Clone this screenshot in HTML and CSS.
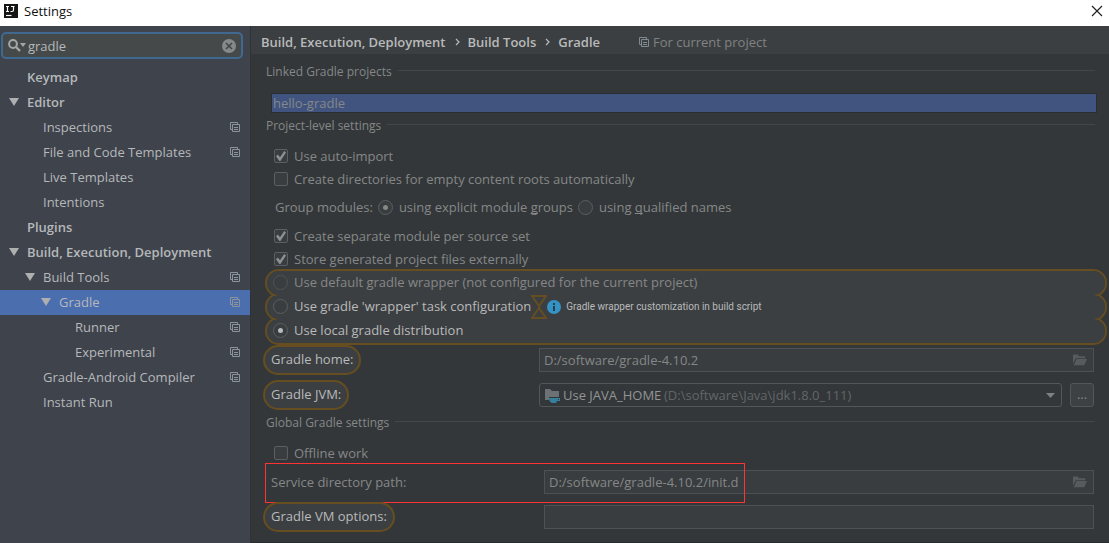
FILE: index.html
```html
<!DOCTYPE html>
<html lang="en">
<head>
<meta charset="utf-8">
<title>Settings</title>
<link rel="stylesheet" href="styles.css">
</head>
<body>
<svg width="0" height="0" class="defs" aria-hidden="true">
  <symbol id="copy" viewBox="0 0 10 10"><path d="M2 7.500H.5V.5H7.500V2M2.500 2.500H9.500V9.500H2.500ZM4 5.500H8M4 7.500H8" fill="none" stroke="currentColor"/></symbol>
  <symbol id="tri" viewBox="0 0 10 8" preserveAspectRatio="none"><path d="M0 0H10L5 8Z" fill="currentColor"/></symbol>
  <symbol id="folder" viewBox="0 0 16 12"><path d="M0 0H5L6.500 2H13V4H3L0 10Z M3.700 5H15L12 11.500H.8Z" fill="currentColor"/></symbol>
</svg>
<header class="titlebar">
  <svg class="app-icon" viewBox="0 0 14 14" aria-hidden="true"><rect width="14" height="14" fill="#151515"/><path d="M2 2.500H5M3.500 2.500V7.500M2 7.500H5M7 2.500H10.500M9.500 2.500V6Q9.500 7.500 8 7.500H6.500" fill="none" stroke="#fff" stroke-width="1.200"/><path d="M2 11.500H7.500" stroke="#fff" stroke-width="1.200"/></svg>
  <h1 class="title">Settings</h1>
  <button class="close" aria-label="Close"><svg viewBox="0 0 12 12"><path d="M1 1L11 11M11 1L1 11" stroke="#222" stroke-width="1.200"/></svg></button>
</header>
<div class="window">
  <aside class="sidebar">
    <div class="search">
      <svg class="search-icon" viewBox="0 0 18 14" aria-hidden="true"><circle cx="5" cy="5" r="3.900" fill="none" stroke="#a3a7a8" stroke-width="2"/><path d="M8 8L12 12" stroke="#a3a7a8" stroke-width="2.400"/><path d="M12 4H18L15 8Z" fill="#a3a7a8"/></svg>
      <input class="search-input" type="text" value="gradle" aria-label="Search settings">
      <button class="clear" aria-label="Clear search"><svg viewBox="0 0 14 14"><circle cx="7" cy="7" r="7" fill="#85898a"/><path d="M4 4L10 10M10 4L4 10" stroke="#424647" stroke-width="1.600"/></svg></button>
    </div>
    <nav class="tree">
      <a class="node bold l1" href="#">Keymap</a>
      <a class="node bold l1" href="#"><svg class="tri"><use href="#tri"/></svg>Editor</a>
      <a class="node l2" href="#">Inspections<svg class="copy"><use href="#copy"/></svg></a>
      <a class="node l2" href="#">File and Code Templates<svg class="copy"><use href="#copy"/></svg></a>
      <a class="node l2" href="#">Live Templates</a>
      <a class="node l2" href="#">Intentions</a>
      <a class="node bold l1" href="#">Plugins</a>
      <a class="node bold l1" href="#"><svg class="tri"><use href="#tri"/></svg>Build, Execution, Deployment</a>
      <a class="node l2" href="#"><svg class="tri"><use href="#tri"/></svg>Build Tools<svg class="copy"><use href="#copy"/></svg></a>
      <a class="node l3 selected" href="#"><svg class="tri"><use href="#tri"/></svg>Gradle<svg class="copy"><use href="#copy"/></svg></a>
      <a class="node l4" href="#">Runner<svg class="copy"><use href="#copy"/></svg></a>
      <a class="node l4" href="#">Experimental<svg class="copy"><use href="#copy"/></svg></a>
      <a class="node l2" href="#">Gradle-Android Compiler<svg class="copy"><use href="#copy"/></svg></a>
      <a class="node l2" href="#">Instant Run</a>
    </nav>
  </aside>
  <main class="main">
    <div class="crumbs">
      <span>Build, Execution, Deployment</span><svg class="chev" viewBox="0 0 5 8"><path d="M1 1L4 4L1 7" fill="none" stroke="currentColor" stroke-width="1.200"/></svg>
      <span>Build Tools</span><svg class="chev" viewBox="0 0 5 8"><path d="M1 1L4 4L1 7" fill="none" stroke="currentColor" stroke-width="1.200"/></svg>
      <span>Gradle</span>
      <span class="scope"><svg class="scope-icon"><use href="#copy"/></svg>For current project</span>
    </div>
    <form class="form">
      <h2 class="section">Linked Gradle projects</h2>
      <div class="list"><div class="list-item">hello-gradle</div></div>
      <h2 class="section">Project-level settings</h2>
      <div class="checks">
        <label class="check"><input type="checkbox" class="box" checked>Use auto-import</label>
        <label class="check"><input type="checkbox" class="box">Create directories for empty content roots automatically</label>
      </div>
      <div class="modules">
        <span class="modules-label">Group modules:</span>
        <label class="check"><input type="radio" class="dot" name="group" checked><span>using explicit module <u>g</u>roups</span></label>
        <label class="check"><input type="radio" class="dot" name="group"><span>using <u>q</u>ualified names</span></label>
      </div>
      <div class="checks tight">
        <label class="check"><input type="checkbox" class="box" checked>Create separate module per source set</label>
        <label class="check"><input type="checkbox" class="box" checked>Store generated project files externally</label>
      </div>
      <div class="options">
        <div class="option"><label class="check option-label"><input type="radio" class="dot faint" name="dist">Use default gradle wrapper (not configured for the current project)</label></div>
        <div class="option lit"><label class="check option-label"><input type="radio" class="dot" name="dist">Use gradle 'wrapper' task configuration</label>
          <svg class="hourglass" viewBox="0 0 16 24" aria-hidden="true"><path d="M1 1H15L8 11V13L15 23H1L8 13V11Z" fill="#3c3f41" stroke="#664e20" stroke-width="2"/></svg>
          <svg class="info" viewBox="0 0 14 14" aria-hidden="true"><circle cx="7" cy="7" r="7" fill="#3592c4"/><path d="M7 3V5M7 6V11" stroke="#263f4d" stroke-width="2"/></svg>
          <span class="note">Gradle wrapper customization in build script</span></div>
        <div class="option lit"><label class="check option-label"><input type="radio" class="dot" name="dist" checked>Use local gradle distribution</label></div>
      </div>
      <div class="rows">
        <div class="row">
          <div class="cell"><label class="pill" for="home">Gradle home:</label></div>
          <div class="field"><input id="home" class="text" type="text" value="D:/software/gradle-4.10.2"><button type="button" class="browse" aria-label="Browse"><svg><use href="#folder"/></svg></button></div>
        </div>
        <div class="row">
          <div class="cell"><label class="pill" for="jvm">Gradle JVM:</label></div>
          <div class="jvm">
            <select id="jvm" class="select"><option>Use JAVA_HOME</option></select>
            <div class="jvm-face"><svg class="sdk" viewBox="0 0 16 15"><path d="M0 1H5L7 3H14V9H4V12H0Z" fill="#6b7175"/><path d="M4 10H15V13H12L11 15H7Q4 14 4 10Z" fill="#36809b"/><path d="M13 11H14V12H13Z" fill="#333739"/></svg><span class="jvm-path">(D:\software\Java\jdk1.8.0_111)</span><svg class="arrow"><use href="#tri"/></svg></div>
          </div>
          <button type="button" class="more" aria-label="More">...</button>
        </div>
      </div>
      <h2 class="section">Global Gradle settings</h2>
      <div class="checks">
        <label class="check"><input type="checkbox" class="box">Offline work</label>
      </div>
      <div class="rows global">
        <div class="row marked">
          <div class="cell"><label class="plain" for="service">Service directory path:</label></div>
          <div class="field"><input id="service" class="text" type="text" value="D:/software/gradle-4.10.2/init.d"><button type="button" class="browse" aria-label="Browse"><svg><use href="#folder"/></svg></button></div>
        </div>
        <div class="row">
          <div class="cell"><label class="pill" for="vm">Gradle VM options:</label></div>
          <div class="field"><input id="vm" class="text" type="text"></div>
        </div>
      </div>
    </form>
  </main>
</div>
</body>
</html>
```
FILE: styles.css
```css
* { box-sizing: border-box; }
body {
  margin: 0;
  min-height: 100vh;
  display: flex;
  flex-direction: column;
  background: #333739;
  color: #858788;
  font: 13px/20px "Open Sans", "Noto Sans", sans-serif;
}
button, input, select { font: inherit; color: inherit; margin: 0; }
button { border: 0; padding: 0; background: none; display: flex; }
svg { display: block; flex: none; }
u { text-decoration-skip-ink: none; }
.defs { position: absolute; }

.titlebar { display: flex; align-items: center; height: 26px; padding: 0 6px 4px 4px; background: #fff; color: #111; }
.app-icon { width: 14px; height: 14px; }
.title { margin: 0 auto 0 6px; font-size: 13px; font-weight: 400; }
.close svg { width: 12px; height: 12px; }

.window { flex: 1; display: flex; }
.sidebar { width: 251px; flex: none; background: #3f434c; border-right: 1px solid #303335; }
.search { display: flex; align-items: center; height: 27px; margin: 6px 7px 0 1px; padding: 0 5px; background: #45494a; border: 2px solid #40698f; border-radius: 5px; }
.search-icon { width: 18px; height: 14px; }
.search-input { flex: 1; min-width: 0; border: 0; padding: 0 0 0 2px; background: none; color: #b5b8ba; outline: 0; }
.clear svg { width: 14px; height: 14px; }
.tree { display: flex; flex-direction: column; margin-top: 6px; }
.node { display: flex; align-items: center; height: 25px; padding-right: 10px; padding-bottom: 1px; color: #b5b8ba; text-decoration: none; }
.bold { font-weight: 600; }
.l1 { padding-left: 27px; }
.l2 { padding-left: 43px; }
.l3 { padding-left: 59px; }
.l4 { padding-left: 75px; }
.selected { background: #4b6eaf; }
.tri { width: 10px; height: 8px; margin: 0 8px 0 -18px; color: #adafb0; }
.copy { width: 10px; height: 10px; margin-left: auto; color: #8b949c; }

.main { flex: 1; min-width: 0; border-bottom: 1px solid #292b2d; }
.crumbs { display: flex; align-items: center; height: 28px; padding: 4px 10px 0; background: #3c3f41; color: #b8babb; font-weight: 600; white-space: nowrap; }
.chev { width: 5px; height: 8px; margin: 0 8px 0 9px; }
.scope { display: flex; align-items: center; margin-left: 39px; color: #808283; font-weight: 400; }
.scope-icon { width: 10px; height: 10px; margin-right: 4px; color: #7f8b91; }

.form { padding: 9px 14px 10px 15px; }
.section { display: flex; align-items: center; gap: 6px; margin: 0; font-size: 12px; line-height: 18px; font-weight: 400; }
.section::after { content: ""; flex: 1; height: 1px; margin-bottom: 4px; background: #43474a; }
.list { margin: 12px -2px 4px 5px; border: 1px solid #2b2e30; background: #40547f; }
.list-item { padding-left: 1px; line-height: 18px; }
.checks { display: flex; flex-direction: column; align-items: flex-start; gap: 3px; margin: 11px 0 8px 8px; }
.tight { margin: 9px 0 2px 8px; }
.check { display: flex; align-items: center; height: 20px; gap: 6px; white-space: nowrap; }
.box, .dot { appearance: none; flex: none; display: grid; place-items: center; width: 14px; height: 14px; border: 1px solid #5b5f61; background: #393d3f; }
.box { border-radius: 2px; }
.box:checked::before { content: ""; width: 10px; height: 10px; background: #8d9092; clip-path: polygon(0 52%, 18% 36%, 40% 62%, 82% 0, 100% 14%, 44% 100%, 34% 100%); }
.dot { width: 15px; height: 15px; border-radius: 50%; }
.dot:checked::before { content: ""; width: 5px; height: 5px; border-radius: 50%; background: currentColor; }
.faint { border-color: #505455; }
.modules { display: flex; margin-left: 9px; gap: 5px; }

.options { margin: 0 -12px 0 1px; position: relative; z-index: 0; }
.option { position: relative; display: flex; align-items: center; height: 24px; padding-left: 6px; }
.option::before { content: ""; position: absolute; z-index: -2; inset: -2px 0 -2px -2px; border: 2px solid #664e20; border-radius: 14px; }
.option::after { content: ""; position: absolute; z-index: -1; inset: 0 2px 0 0; border-radius: 12px; background: #3c3f41; }
.option-label { padding-bottom: 2px; }
.lit { color: #b8babb; }
.hourglass { width: 16px; height: 24px; }
.info { width: 14px; height: 14px; }
.note { margin-left: 5px; font-family: Roboto, "Liberation Sans", sans-serif; font-size: 10px; white-space: nowrap; }

.rows { display: flex; flex-direction: column; gap: 5px; margin: 2px 0 4px -3px; }
.row { display: flex; align-items: center; position: relative; height: 30px; }
.cell { width: 276px; flex: none; display: flex; }
.global { margin-top: -4px; margin-bottom: 0; }
.global .cell { width: 281px; }
.pill { height: 30px; padding: 2px 6px; border: 2px solid #664e20; border-radius: 15px; background: #3c3f41; color: #b8babb; }
.plain { padding-left: 8px; }
.field { flex: 1; min-width: 0; display: flex; align-items: center; height: 24px; margin-right: 1px; padding-right: 5px; border: 1px solid #4d5153; background: #393d3f; }
.text { flex: 1; min-width: 0; height: 22px; border: 0; padding: 0 4px; background: none; outline: 0; }
.browse svg { width: 15px; height: 12px; color: #565b5e; }
.jvm { flex: 1; display: grid; height: 24px; }
.select { grid-area: 1 / 1; appearance: none; padding: 0 24px 1px 23px; border: 1px solid #53575a; border-radius: 3px; background: #333739; color: #929495; }
.jvm-face { grid-area: 1 / 1; display: flex; align-items: center; padding: 0 7px 0 6px; pointer-events: none; z-index: 1; }
.sdk { width: 16px; height: 15px; }
.jvm-path { margin-left: 103px; color: #626668; white-space: nowrap; }
.arrow { width: 9px; height: 5px; margin-left: auto; color: #7d8183; }
.more { justify-content: center; width: 24px; height: 24px; margin: 0 1px 0 8px; border: 1px solid #53575a; border-radius: 3px; background: #3d4143; }
.marked::after { content: ""; position: absolute; left: 2px; top: -4px; width: 478px; height: 38px; border: 1px solid #f33; pointer-events: none; }
```
